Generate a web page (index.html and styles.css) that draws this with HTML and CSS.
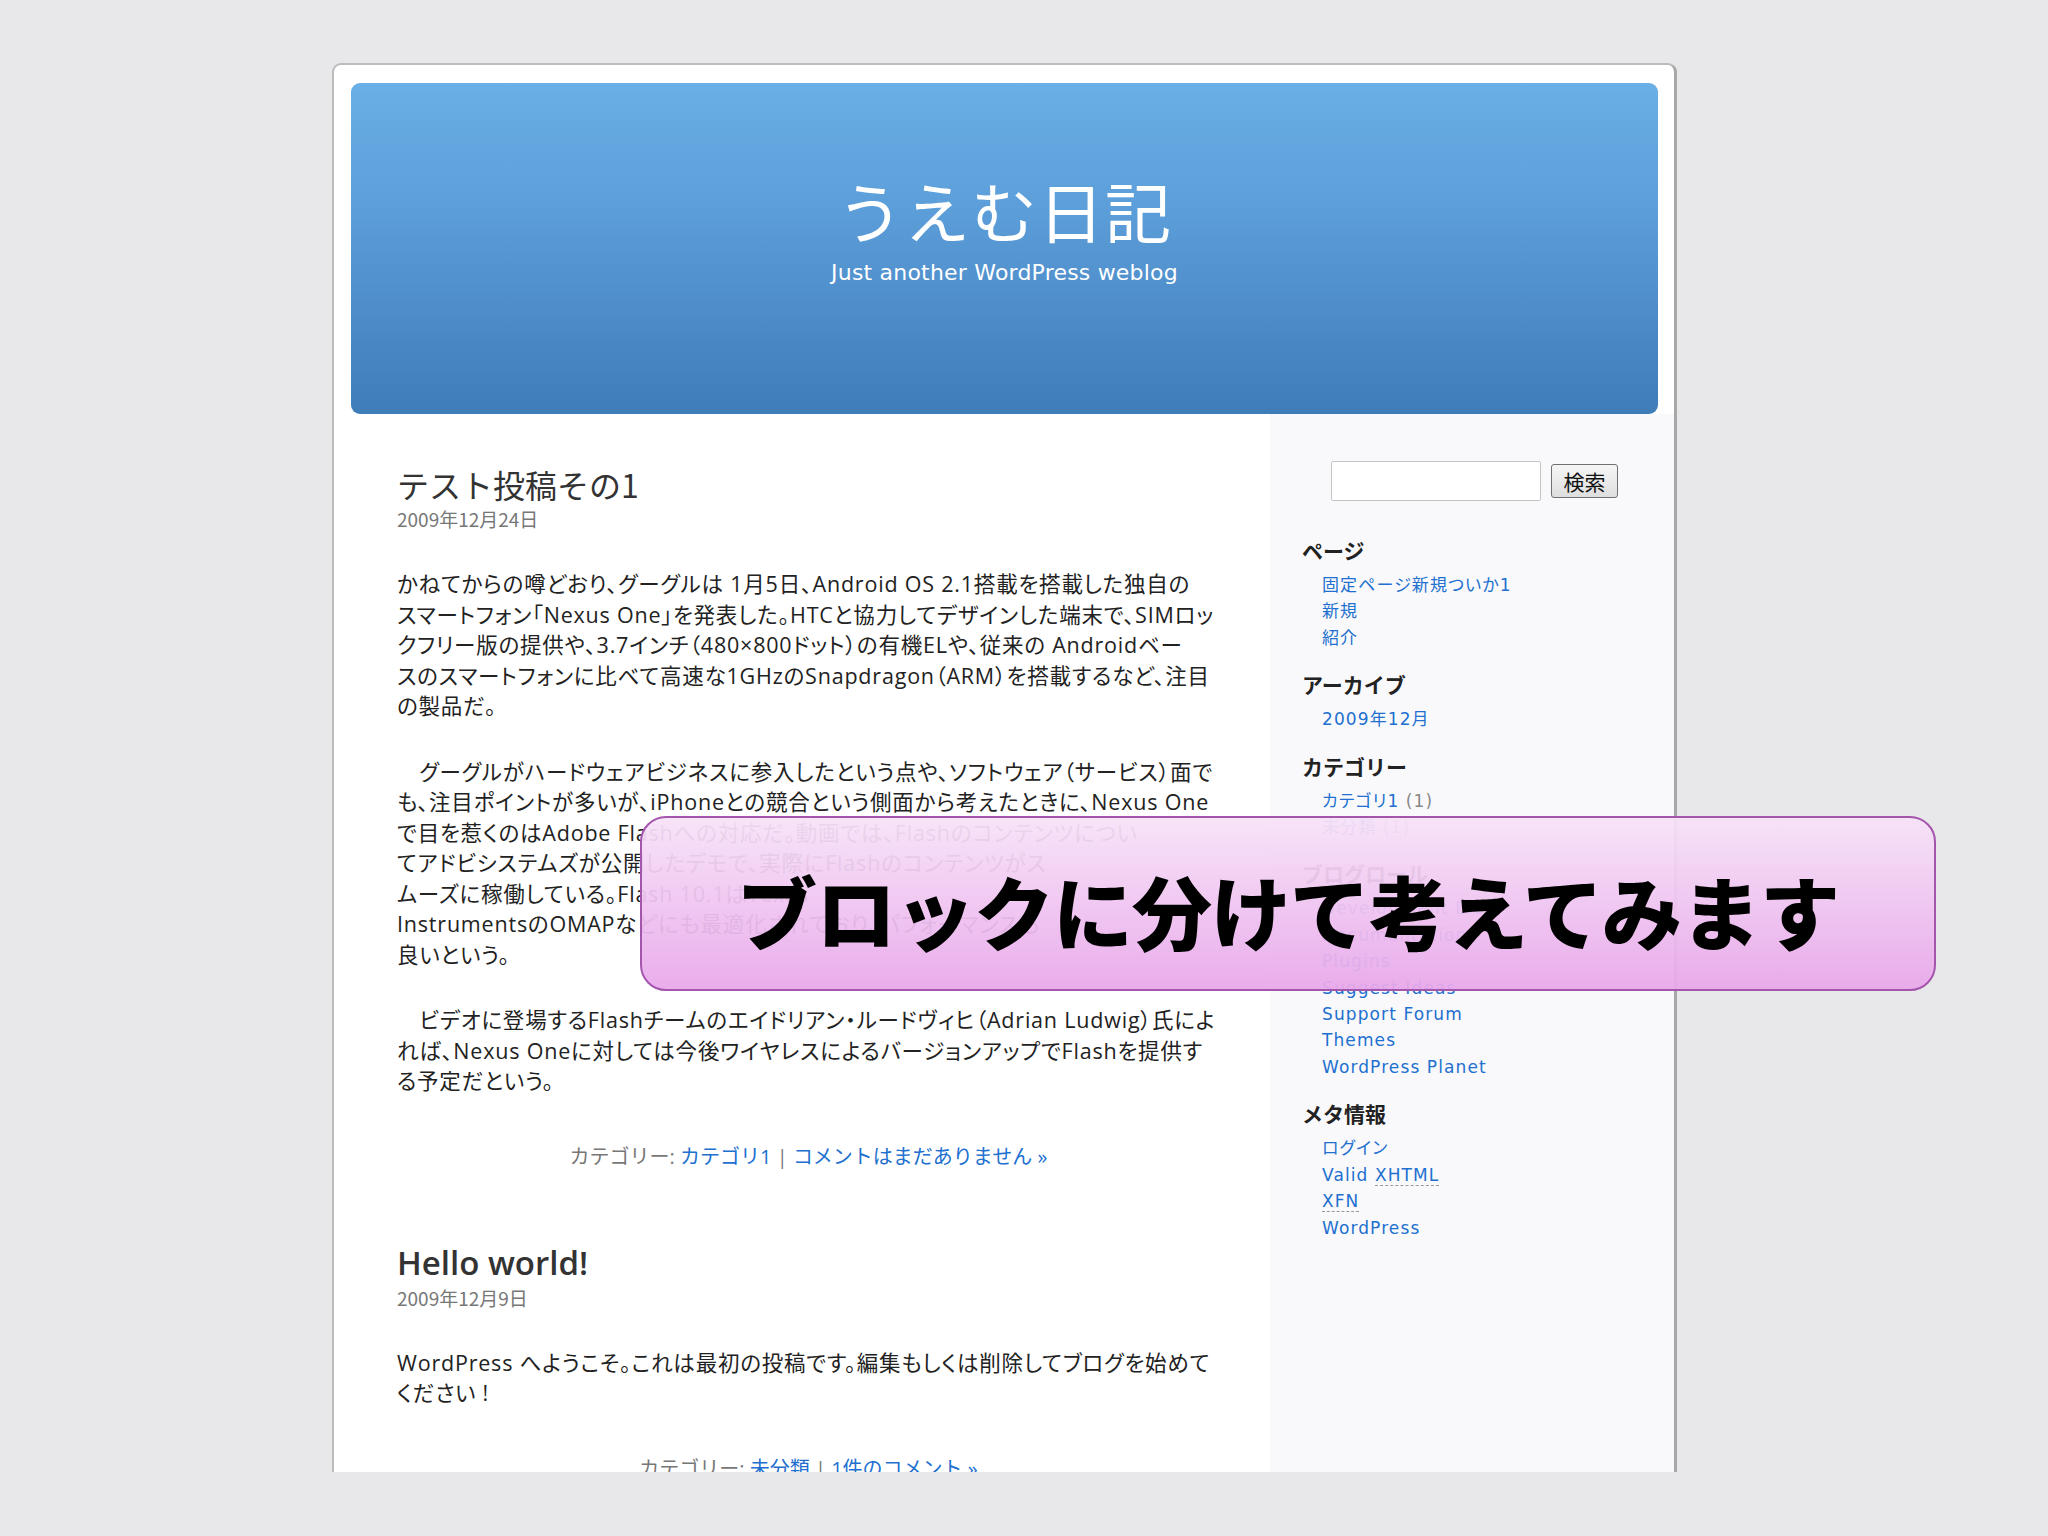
FILE: index.html
```html
<!DOCTYPE html>
<html lang="ja">
<head>
    <meta charset="UTF-8">
    <title>うえむ日記</title>
    <link rel="stylesheet" href="styles.css">
</head>
<body>
    <div class="page">
        <header class="site-header">
            <h1>うえむ日記</h1>
            <div class="description">Just another WordPress weblog</div>
        </header>
        <div class="main">
            <div class="content">
                <div class="post">
                    <h2>テスト投稿その1</h2>
                    <div class="post-date">2009年12月24日</div>
                    <div class="entry">
                        <p>かねてからの噂どおり、グーグルは 1月5日、Android OS 2.1搭載を搭載した独自の<br>
                        スマートフォン「Nexus One」を発表した。HTCと協力してデザインした端末で、SIMロッ<br>
                        クフリー版の提供や、3.7インチ（480×800ドット）の有機ELや、従来の Androidベー<br>
                        スのスマートフォンに比べて高速な1GHzのSnapdragon（ARM）を搭載するなど、注目<br>
                        の製品だ。</p>
                        <p>　グーグルがハードウェアビジネスに参入したという点や、ソフトウェア（サービス）面で<br>
                        も、注目ポイントが多いが、iPhoneとの競合という側面から考えたときに、Nexus One<br>
                        で目を惹くのはAdobe Flashへの対応だ。動画では、Flashのコンテンツについ<br>
                        てアドビシステムズが公開したデモで、実際にFlashのコンテンツがス<br>
                        ムーズに稼働している。Flash 10.1はTexas<br>
                        InstrumentsのOMAPなどにも最適化されており、パフォーマンスも<br>
                        良いという。</p>
                        <p>　ビデオに登場するFlashチームのエイドリアン・ルードヴィヒ（Adrian Ludwig）氏によ<br>
                        れば、Nexus Oneに対しては今後ワイヤレスによるバージョンアップでFlashを提供す<br>
                        る予定だという。</p>
                    </div>
                    <p class="postmetadata">カテゴリー: <a href="#">カテゴリ1</a> | <a href="#">コメントはまだありません &raquo;</a></p>
                </div>
                <div class="post">
                    <h2 class="latin">Hello world!</h2>
                    <div class="post-date">2009年12月9日</div>
                    <div class="entry">
                        <p>WordPress へようこそ。これは最初の投稿です。編集もしくは削除してブログを始めて<br>
                        ください !</p>
                    </div>
                    <p class="postmetadata">カテゴリー: <a href="#">未分類</a> | <a href="#">1件のコメント &raquo;</a></p>
                </div>
            </div>
            <div class="sidebar">
                <form class="searchform">
                    <input type="text" class="search-text">
                    <button type="button" class="search-btn">検索</button>
                </form>
                <h3>ページ</h3>
                <ul>
                    <li><a href="#">固定ページ新規ついか1</a></li>
                    <li><a href="#">新規</a></li>
                    <li><a href="#">紹介</a></li>
                </ul>
                <h3>アーカイブ</h3>
                <ul>
                    <li><a href="#">2009年12月</a></li>
                </ul>
                <h3>カテゴリー</h3>
                <ul>
                    <li><a href="#">カテゴリ1</a> <span class="count">(1)</span></li>
                    <li><a href="#">未分類</a> <span class="count">(1)</span></li>
                </ul>
                <h3>ブログロール</h3>
                <ul>
                    <li><a href="#">Development Blog</a></li>
                    <li><a href="#">Documentation</a></li>
                    <li><a href="#">Plugins</a></li>
                    <li><a href="#">Suggest Ideas</a></li>
                    <li><a href="#">Support Forum</a></li>
                    <li><a href="#">Themes</a></li>
                    <li><a href="#">WordPress Planet</a></li>
                </ul>
                <h3>メタ情報</h3>
                <ul>
                    <li><a href="#">ログイン</a></li>
                    <li><a href="#">Valid <abbr>XHTML</abbr></a></li>
                    <li><a href="#"><abbr>XFN</abbr></a></li>
                    <li><a href="#">WordPress</a></li>
                </ul>
            </div>
        </div>
    </div>
    <div class="callout">ブロックに分けて考えてみます</div>
</body>
</html>
```
FILE: styles.css
```css
body {
    margin: 0;
    height: 1536px;
    overflow: hidden;
    background-color: #e8e8ea;
    font-family: "Open Sans", "Noto Sans CJK JP", sans-serif;
    color: #222;
}
a {
    color: #2170cf;
    text-decoration: none;
}
.page {
    box-sizing: border-box;
    width: 1345px;
    height: 1409px;
    margin: 63px 0 0 332px;
    background-color: white;
    border: 2px solid #bcbcbc;
    border-right: 3px solid #a8a8a8;
    border-bottom: none;
    border-radius: 9px 9px 0 0;
    overflow: hidden;
}
.site-header {
    height: 331px;
    margin: 18px 16px 0 17px;
    border-radius: 9px;
    background: linear-gradient(to bottom, #6aafe6 0%, #5b9dd8 40%, #4886c3 80%, #3f7db9 100%);
    color: white;
    text-align: center;
    padding-top: 86px;
    box-sizing: border-box;
}
.site-header h1 {
    margin: 0;
    font-family: "Noto Sans CJK JP", sans-serif;
    font-weight: normal;
    font-size: 66px;
    line-height: 80px;
    letter-spacing: 1px;
}
.description {
    margin-top: 11px;
    font-family: "DejaVu Sans", sans-serif;
    font-size: 22px;
    line-height: 26px;
    letter-spacing: 0.2px;
}
.main {
    display: flex;
}
.content {
    width: 936px;
    box-sizing: border-box;
    padding: 50px 50px 0 63px;
}
.post {
    margin-bottom: 73px;
}
.post h2 {
    margin: 0;
    font-family: "Noto Sans CJK JP", sans-serif;
    font-weight: normal;
    font-size: 32px;
    line-height: 40px;
    color: #333;
}
.post h2.latin {
    font-family: "Open Sans", sans-serif;
    font-weight: 600;
    font-size: 33px;
}
.post-date {
    margin-top: 3px;
    font-family: "Noto Sans CJK JP", sans-serif;
    font-size: 19px;
    line-height: 24px;
    color: #777;
}
.entry {
    margin-top: 38px;
    font-size: 21.5px;
    line-height: 30.5px;
    font-feature-settings: "palt";
    letter-spacing: 0.8px;
}
.entry p {
    margin: 0 0 35px;
    white-space: nowrap;
}
.entry p:last-child {
    margin-bottom: 0;
}
.postmetadata {
    margin: 47px 0 0;
    text-align: center;
    font-size: 20px;
    line-height: 26px;
    color: #777;
}
.sidebar {
    flex: 1;
    background-color: #f9f9fb;
    padding: 47px 20px 0 32px;
    font-family: "DejaVu Sans", "Noto Sans CJK JP", sans-serif;
}
.searchform {
    display: flex;
    align-items: center;
    margin: 0 0 35px 29px;
}
.search-text {
    width: 210px;
    height: 40px;
    box-sizing: border-box;
    border: 1px solid #c4c4c4;
    border-radius: 2px;
    background: white;
}
.search-btn {
    margin-left: 10px;
    width: 67px;
    height: 34px;
    border: 1px solid #707070;
    border-radius: 3px;
    background: linear-gradient(to bottom, #f6f6f6, #dedede);
    font-family: "Noto Sans CJK JP", sans-serif;
    font-size: 21px;
    line-height: 28px;
    padding: 0;
    color: #111;
}
.sidebar h3 {
    margin: 0 0 8px;
    font-family: "Noto Sans CJK JP", sans-serif;
    font-size: 21px;
    font-weight: bold;
    line-height: 28px;
    color: #222;
}
.sidebar ul {
    list-style: none;
    margin: 0 0 19px;
    padding: 0 0 0 20px;
    font-size: 17px;
    letter-spacing: 1.1px;
    line-height: 26.4px;
    font-feature-settings: "palt";
}
.sidebar .count {
    color: #888;
}
abbr {
    text-decoration: none;
    border-bottom: 1px dashed #999;
}
.callout {
    position: absolute;
    left: 640px;
    top: 816px;
    width: 1296px;
    height: 175px;
    box-sizing: border-box;
    border: 2px solid #a456ad;
    border-radius: 26px;
    background: linear-gradient(to bottom, rgba(247, 226, 248, 0.94), rgba(232, 168, 234, 0.94));
    display: flex;
    align-items: center;
    justify-content: center;
    font-family: "Noto Sans CJK JP", sans-serif;
    font-weight: 900;
    font-size: 80px;
    letter-spacing: -1px;
    color: #000;
    padding-top: 10px;
}
```
